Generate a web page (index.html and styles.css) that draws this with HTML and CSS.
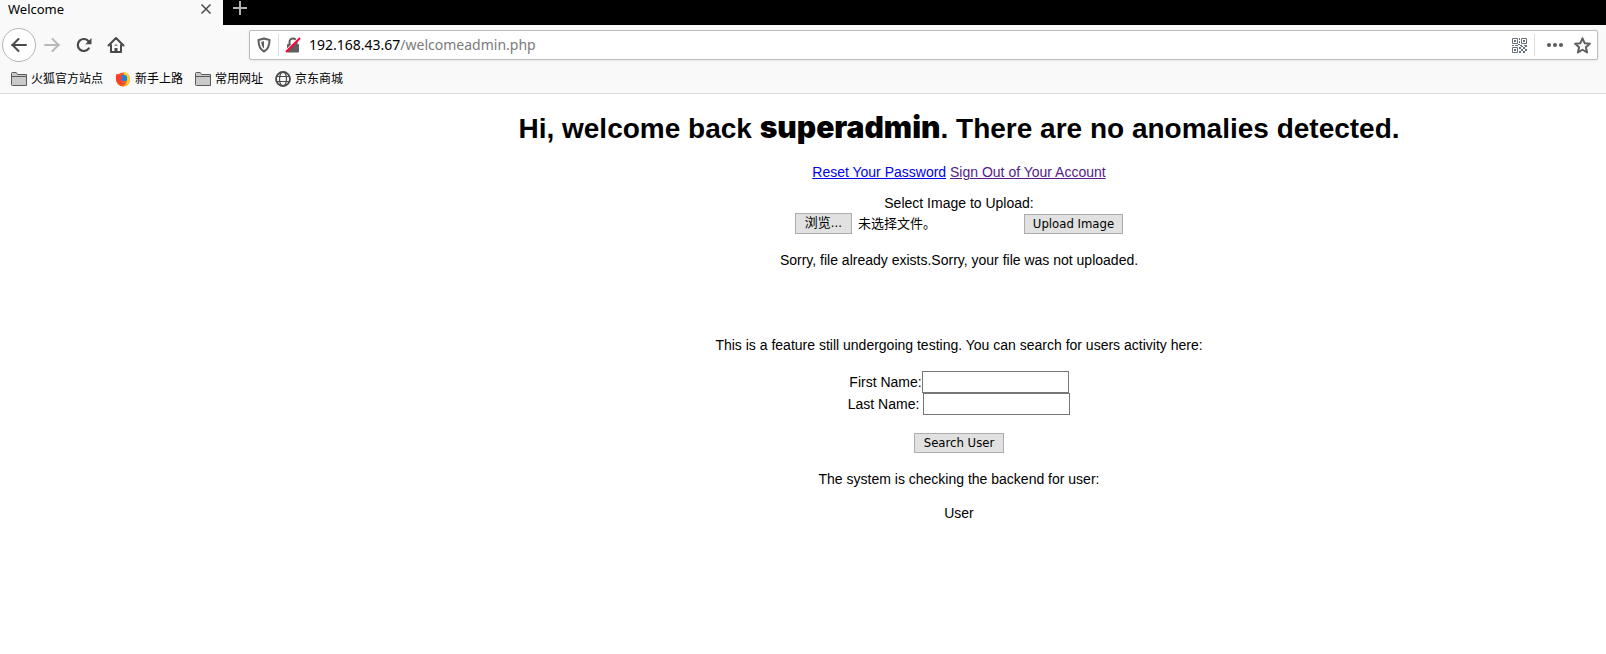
FILE: index.html
```html
<!DOCTYPE html>
<html lang="en">
<head>
<meta charset="utf-8">
<title>Welcome</title>
<link rel="stylesheet" href="styles.css">
</head>
<body>
<header class="browser">
  <div class="tabs">
    <div class="tab">
      <span class="tab-title">Welcome</span>
      <button class="icon-button" type="button" aria-label="Close tab">
        <svg width="12" height="12" viewBox="0 0 12 12" fill="none" stroke="#4a4a4a" stroke-width="1.5"><path d="M1.5 1.5l9 9M10.5 1.5l-9 9"/></svg>
      </button>
    </div>
    <button class="icon-button new-tab" type="button" aria-label="New tab">
      <svg width="14" height="14" viewBox="0 0 14 14" fill="none" stroke="#b4b4b4" stroke-width="2"><path d="M7 0v14M0 7h14"/></svg>
    </button>
  </div>
  <nav class="toolbar">
    <div class="nav-buttons">
      <button class="icon-button back" type="button" aria-label="Back">
        <svg width="18" height="18" viewBox="0 0 18 18" fill="none" stroke="#4a4a4a" stroke-width="2" stroke-linecap="round" stroke-linejoin="round"><path d="M16 9H2M8.500 3l-6 6 6 6"/></svg>
      </button>
      <button class="icon-button" type="button" aria-label="Forward">
        <svg width="18" height="18" viewBox="0 0 18 18" fill="none" stroke="#b8b8b8" stroke-width="2" stroke-linecap="round" stroke-linejoin="round"><path d="M2 9h14M9.500 3l6 6-6 6"/></svg>
      </button>
      <button class="icon-button" type="button" aria-label="Reload">
        <svg width="16" height="16" viewBox="0 0 16 16"><path d="M12.800 11.300A6 6 0 1 1 12.600 4.400" fill="none" stroke="#4a4a4a" stroke-width="2.200" stroke-linecap="round"/><path d="M15.500 1v6.200H9.300z" fill="#4a4a4a"/></svg>
      </button>
      <button class="icon-button" type="button" aria-label="Home">
        <svg width="18" height="18" viewBox="0 0 18 18" fill="none" stroke="#4a4a4a" stroke-width="2" stroke-linecap="round" stroke-linejoin="round"><path d="M1.500 9.500L9 2l7.500 7.500M4 9v7h10V9"/><path d="M9 16v-4" stroke-width="3" stroke-linecap="butt"/><path d="M8 9.200h2" stroke-width="1"/></svg>
      </button>
    </div>
    <div class="urlbar">
      <svg class="shield" width="14" height="16" viewBox="0 0 14 16"><path d="M7 1.500L12.500 3c0 5-.8 9-5.500 11.500C2.300 12 1.500 8 1.500 3z" fill="none" stroke="#5e5e5e" stroke-width="2" stroke-linejoin="round"/><path d="M7 4.200v7.300C5 10 4.400 7.500 4.300 4.800z" fill="#5e5e5e"/></svg>
      <span class="divider"></span>
      <svg class="lock" width="16" height="16" viewBox="0 0 16 16"><rect x="2" y="7" width="12" height="8.500" rx="1" fill="#5e5e5e"/><path d="M4.500 8V5a3.500 3.500 0 0 1 7 0v3" fill="none" stroke="#5e5e5e" stroke-width="2"/><path d="M0 14.500L14.500 0" stroke="#fff" stroke-width="1.500"/><path d="M1 15L15 1" stroke="#ff0039" stroke-width="2"/></svg>
      <div class="address"><span class="host">192.168.43.67</span>/welcomeadmin.php</div>
      <svg class="qr" width="15" height="15" viewBox="0 0 15 15"><g fill="none" stroke="#66717c"><path d="M.5.5h5v5h-5zM9.500.5h5v5h-5zM.5 9.500h5v5h-5z"/></g><path fill="#66717c" d="M2 2h2v2H2zM11 2h2v2h-2zM2 11h2v2H2zM7 0h1v2H7zM7 3h1v2H7zM0 7h2v1H0zM3 7h3v1H3zM6 6h2v1H6zM8 7h2v1H8zM12 7h3v1h-3zM7 9h2v2H7zM9 8h2v1H9zM11 9h2v2h-2zM13 8h2v1h-2zM9 11h2v2H9zM13 11h2v2h-2zM7 13h2v2H7zM11 13h2v2h-2z"/></svg>
      <span class="divider"></span>
      <svg class="dots" width="18" height="6" viewBox="0 0 18 6" fill="#5e5e5e"><circle cx="3" cy="3" r="2.100"/><circle cx="9" cy="3" r="2.100"/><circle cx="15" cy="3" r="2.100"/></svg>
      <svg width="17" height="17" viewBox="0 0 16 16" fill="none" stroke="#5e5e5e" stroke-width="1.900" stroke-linejoin="round"><path d="M8 1.300l2 4.500 4.900.5-3.700 3.300 1.100 4.900L8 12l-4.300 2.500 1.100-4.900L1.100 6.300 6 5.800z"/></svg>
    </div>
  </nav>
  <nav class="bookmarks">
    <a class="bookmark" href="#"><svg width="16" height="14" viewBox="0 0 16 14"><path d="M.5 12.500v-11a1 1 0 0 1 1-1h3.700l1.500 2h8.800v11h-14a1 1 0 0 1-1-1z" fill="#cacaca" stroke="#5a5a5a"/><path d="M.5 4.500h15" fill="none" stroke="#5a5a5a"/></svg>火狐官方站点</a>
    <a class="bookmark" href="#"><svg width="16" height="16" viewBox="0 0 16 16"><circle cx="8" cy="8.500" r="7" fill="#ff5a1f"/><path d="M9 1c4 1 6.500 4 6 8-.4 4-3.300 6.500-7 6.500 3-1.500 4.500-4.500 3-7.500S8.500 3.500 9 1z" fill="#ffc928"/><circle cx="8.500" cy="7.500" r="3.700" fill="#1686dc"/><path d="M1.500 3c1.500 0 2.500.5 3.500 1.500L8 6.500 6 8c1 2.500 4 2.500 5.500 1.500-1 4-5.500 5-8.500 2.500C.8 10 .2 6 1.500 3z" fill="#ff3b2f"/><path d="M5.500 9.500c1.500 2 4.500 1.500 5.500.5-.7 2.500-4 3-5.500-.5z" fill="#ff9a1f"/></svg>新手上路</a>
    <a class="bookmark" href="#"><svg width="16" height="14" viewBox="0 0 16 14"><path d="M.5 12.500v-11a1 1 0 0 1 1-1h3.700l1.500 2h8.800v11h-14a1 1 0 0 1-1-1z" fill="#cacaca" stroke="#5a5a5a"/><path d="M.5 4.500h15" fill="none" stroke="#5a5a5a"/></svg>常用网址</a>
    <a class="bookmark" href="#"><svg width="16" height="16" viewBox="0 0 16 16" fill="none" stroke="#4a4a4a"><circle cx="8" cy="8" r="7" stroke-width="1.800"/><ellipse cx="8" cy="8" rx="3.500" ry="7" stroke-width="1.200"/><path d="M1.500 5.500h13M1.500 10.500h13" stroke-width="1.200"/></svg>京东商城</a>
  </nav>
</header>
<main class="page">
  <h1 class="title">Hi, welcome back <b class="user-name">superadmin</b>. There are no anomalies detected.</h1>
  <p class="links"><a href="#">Reset Your Password</a> <a class="visited" href="#">Sign Out of Your Account</a></p>
  <form class="upload">
    <div>Select Image to Upload:</div>
    <div class="upload-row">
      <input class="file-input" type="file" id="image">
      <label class="file-picker" for="image"><span class="button browse">浏览...</span><span>未选择文件。</span></label>
      <button class="button" type="button">Upload Image</button>
    </div>
  </form>
  <p class="upload-status">Sorry, file already exists.Sorry, your file was not uploaded.</p>
  <p class="intro">This is a feature still undergoing testing. You can search for users activity here:</p>
  <form class="search">
    <div class="field"><label for="first">First Name:</label><input class="text-input" type="text" id="first"></div>
    <div class="field"><label for="last">Last Name:&nbsp;</label><input class="text-input" type="text" id="last"></div>
    <button class="button search-button" type="button">Search User</button>
  </form>
  <p class="result">The system is checking the backend for user:</p>
  <p class="result">User</p>
</main>
</body>
</html>
```
FILE: styles.css
```css
* {
  box-sizing: border-box;
}

body {
  margin: 0;
  background: #fff;
  color: #000;
  font: 14px/20px "Liberation Sans", Arial, "Noto Sans CJK SC", sans-serif;
}

svg {
  display: block;
  flex: none;
}

.browser {
  background: #f9f9fa;
  border-bottom: 1px solid #dcdcdc;
  font-family: "Noto Sans", "Noto Sans CJK SC", sans-serif;
}

.tabs {
  display: flex;
  height: 25px;
  background: #000;
}

.tab {
  display: flex;
  justify-content: space-between;
  width: 223px;
  padding: 0 11px 0 8px;
  background: #f9f9fa;
}

.tab-title {
  font-size: 13px;
  line-height: 18px;
}

.icon-button {
  display: flex;
  align-items: center;
  justify-content: center;
  padding: 0;
  border: 0;
  background: none;
}

.tab .icon-button {
  height: 18px;
}

.new-tab {
  height: 16px;
  margin-left: 10px;
}

.toolbar {
  display: flex;
  align-items: center;
  height: 40px;
  padding: 0 8px 0 2px;
}

.nav-buttons {
  display: flex;
  align-items: center;
  gap: 15px;
  width: 247px;
}

.back {
  width: 34px;
  height: 34px;
  margin-right: -8px;
  border: 1px solid #b5b5b5;
  border-radius: 50%;
  background: #fff;
}

.urlbar {
  display: flex;
  flex: 1;
  align-items: center;
  height: 30px;
  padding: 0 6px 0 7px;
  border: 1px solid #bcbcbc;
  border-radius: 2px;
  background: #fff;
  box-shadow: 0 1px 3px rgba(0, 0, 0, 0.08);
}

.divider {
  width: 1px;
  height: 22px;
  background: #dcdcdc;
}

.shield {
  margin-right: 7px;
}

.lock {
  margin: 0 8px 0 6px;
}

.address {
  flex: 1;
  color: #7b7b7b;
  font-size: 14px;
}

.host {
  color: #000;
}

.qr {
  margin-right: 7px;
}

.dots {
  margin: 0 10px 0 11px;
}

.bookmarks {
  display: flex;
  gap: 12px;
  height: 28px;
  padding-left: 11px;
}

.bookmark {
  display: flex;
  align-items: center;
  gap: 4px;
  color: #000;
  font-size: 12px;
  text-decoration: none;
}

.page {
  padding: 16px 0 0 312px;
  text-align: center;
}

.title {
  margin: 0 0 14px;
  font-size: 28px;
  line-height: 38px;
}

.user-name {
  font-family: Inter, sans-serif;
  font-size: 30px;
  font-weight: 900;
  line-height: 30px;
}

.links {
  margin: 0 0 11px;
}

.links a {
  color: #00e;
}

.links .visited {
  color: #551a8b;
}

.upload-row {
  display: flex;
  align-items: flex-end;
  justify-content: center;
}

.file-input {
  position: absolute;
  width: 1px;
  height: 1px;
  opacity: 0;
}

.file-picker {
  display: flex;
  align-items: center;
  gap: 6px;
  width: 229px;
  font-size: 13px;
}

.button {
  height: 20px;
  padding: 0 8px;
  border: 1px solid #adadad;
  background: #e1e1e1;
  color: #000;
  font: 13px/18px "DejaVu Sans Condensed", "Noto Sans CJK SC", sans-serif;
}

.browse {
  height: 21px;
  padding: 0 9px;
}

.upload-status {
  margin: 16px 0 65px;
}

.intro {
  margin: 0 0 16px;
}

.field {
  display: flex;
  align-items: center;
  justify-content: center;
}

.text-input {
  width: 147px;
  height: 22px;
  padding: 1px 3px;
  border: 1px solid #767676;
  background: #fff;
  font: inherit;
}

.search-button {
  display: block;
  margin: 18px auto 16px;
  padding: 0 9px;
}

.result {
  margin: 0 0 14px;
}
```
